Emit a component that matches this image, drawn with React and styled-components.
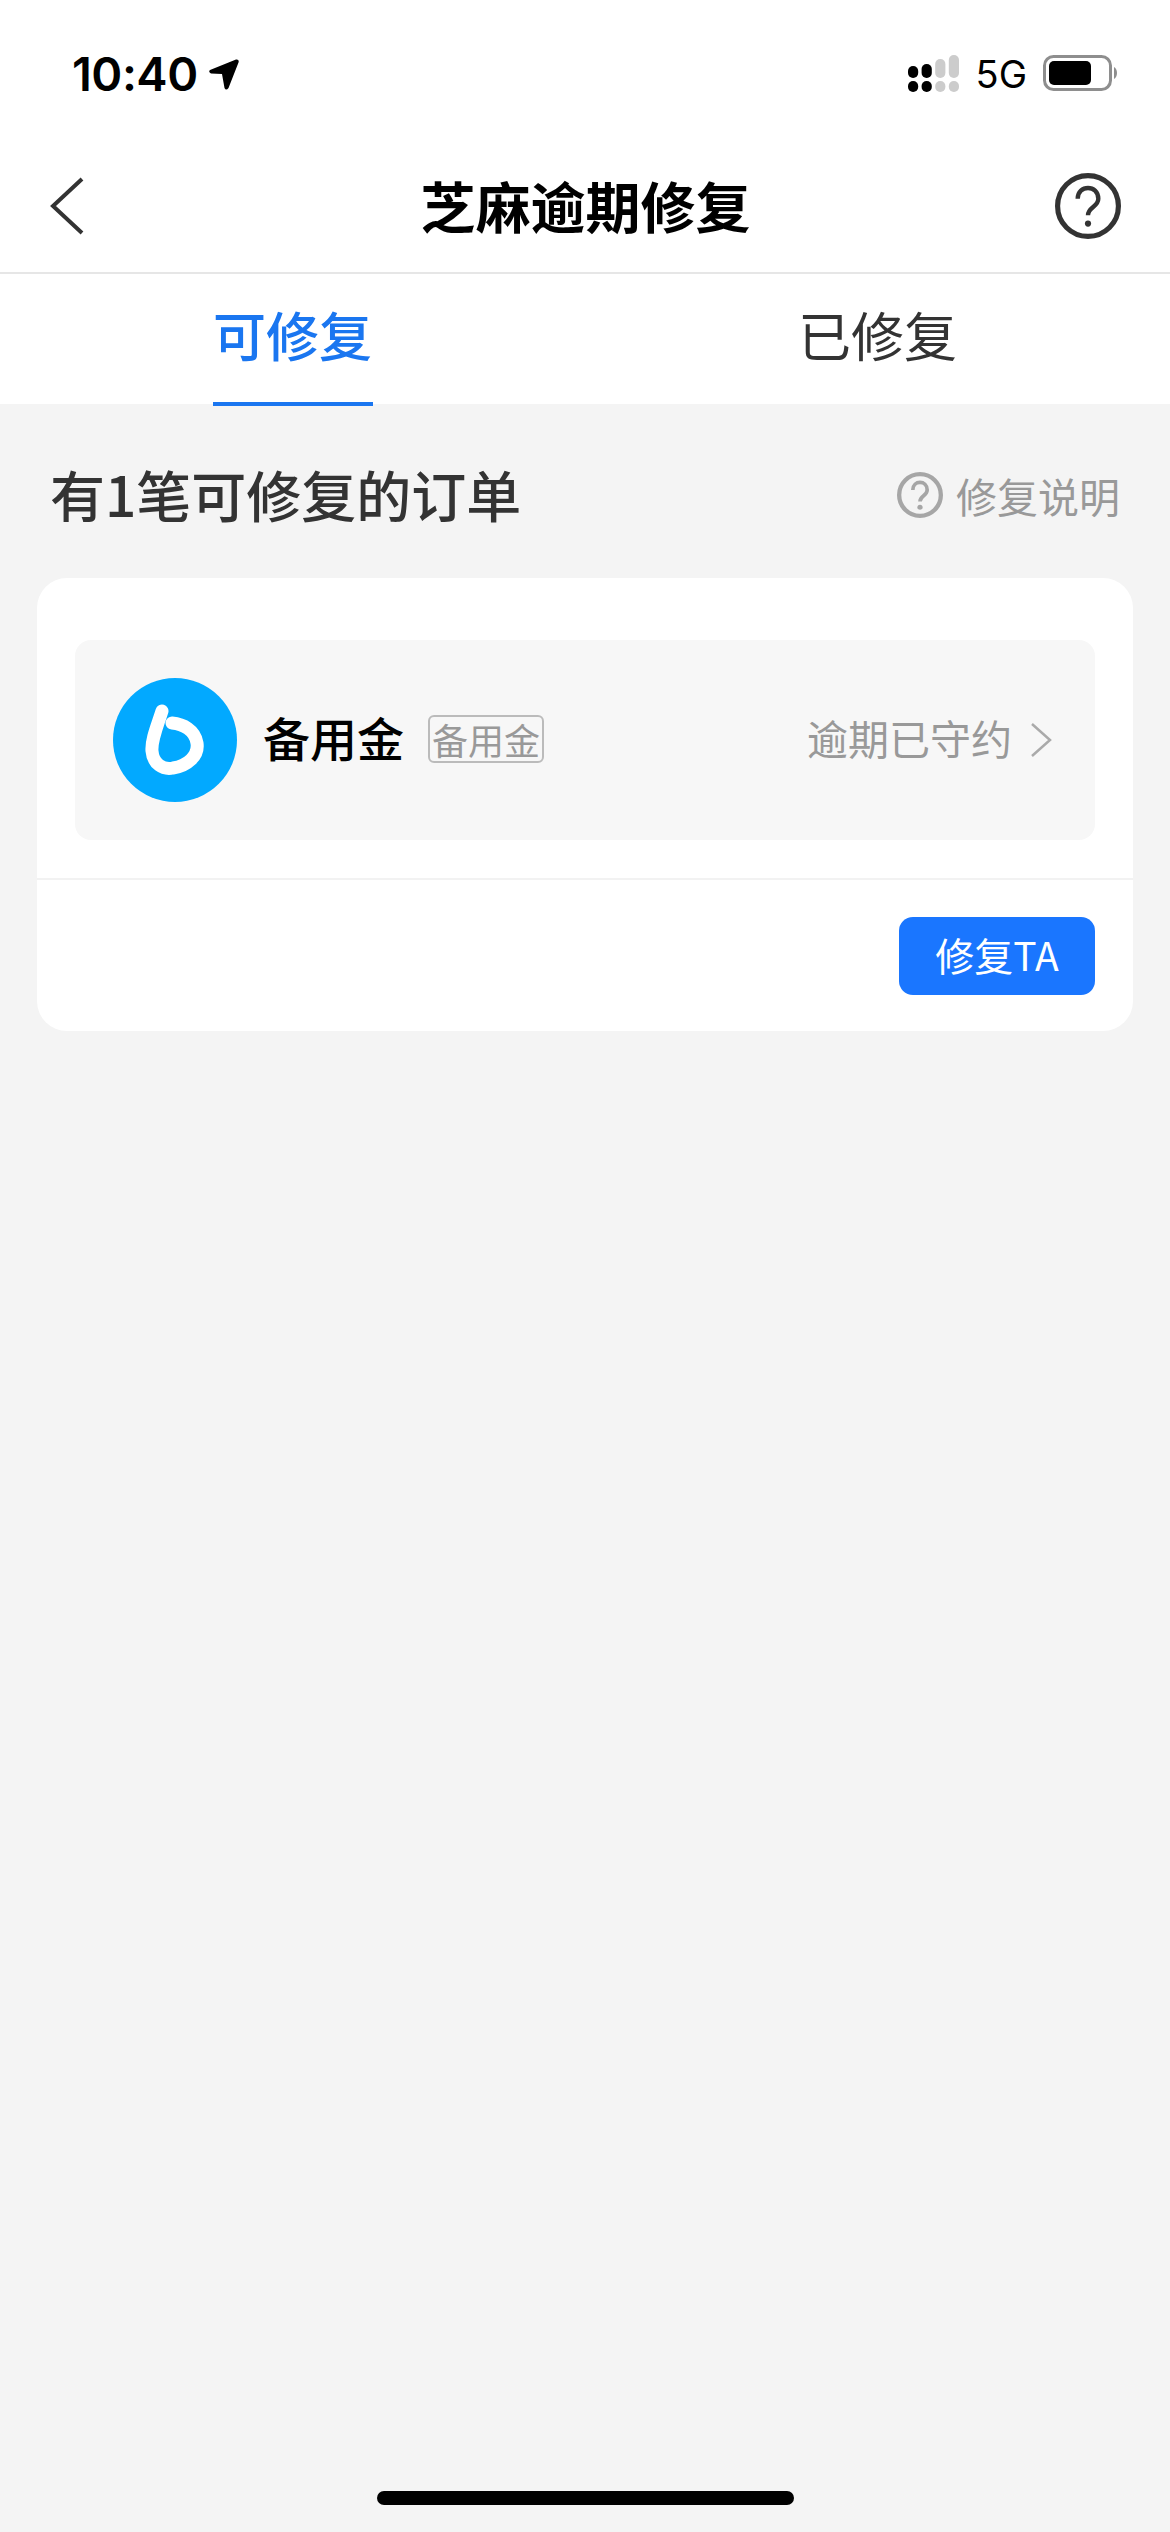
import React from 'react';
import styled, { createGlobalStyle } from 'styled-components';

const Global = createGlobalStyle`
  html, body { margin: 0; padding: 0; background: #f4f4f4; }
  * { box-sizing: border-box; }
  body { font-family: "Inter", "Noto Sans CJK SC", sans-serif; }
`;
const cjk = `"Noto Sans CJK SC", "Inter", sans-serif`;

const Page = styled.div`
  position: relative; width: 1170px; height: 2532px; display: flex; flex-direction: column; background: #f4f4f4;
`;
const Header = styled.header`background: #fff;`;
const StatusBar = styled.div`
  height: 135px; padding: 0 52px 0 72px; display: flex; justify-content: space-between; align-items: flex-start;
`;
const TimeGroup = styled.div`
  display: flex; align-items: center; gap: 11px; height: 48px; margin-top: 50px;
`;
const Time = styled.span`
  font: 600 47px/48px "Inter", sans-serif; color: #000; letter-spacing: -0.5px;
`;
const StatusRight = styled.div`
  display: flex; align-items: center; height: 40px; margin-top: 54px;
`;
const NetLabel = styled.span`
  font: 400 38px/40px "Inter", sans-serif; color: #000; margin: 0 16px 0 17px;
`;
const Nav = styled.nav`
  height: 139px; padding: 0 49px 0 50px; display: grid; grid-template-columns: 1fr auto 1fr; align-items: center;
  border-bottom: 2px solid #e6e6e6;
`;
const NavSide = styled.div`
  display: flex; padding-top: 5px; justify-content: ${p => (p.$end ? 'flex-end' : 'flex-start')}; align-items: center;
`;
const NavTitle = styled.h1`
  margin: 0; font: 600 55px/72px ${cjk}; color: #000;
`;
const Tabs = styled.div`display: grid; grid-template-columns: 1fr 1fr; height: 130px;`;
const Tab = styled.div`display: flex; justify-content: center;`;
const TabLabel = styled.div`
  height: 132px; width: 160px; text-align: center; padding-top: 22px;
  font: ${p => (p.$active ? 500 : 400)} 53px/76px ${cjk};
  color: ${p => (p.$active ? '#1a76f0' : '#333')};
  border-bottom: 4px solid ${p => (p.$active ? '#1a76f0' : 'transparent')};
  white-space: nowrap;
`;
const Body = styled.main`flex: 1; padding: 0 37px;`;
const Section = styled.div`
  height: 174px; padding: 6px 13px 0; display: flex; justify-content: space-between; align-items: center;
`;
const SectionTitle = styled.h2`
  margin: -2px 0 0; font: 500 55px/70px ${cjk}; color: #333;
`;
const Help = styled.div`display: flex; align-items: center; gap: 13px; margin-top: 2px;`;
const HelpText = styled.span`font: 400 41px/56px ${cjk}; color: #999;`;
const Card = styled.section`
  background: #fff; border-radius: 30px; height: 453px; display: flex; flex-direction: column;
`;
const CardTop = styled.div`
  height: 302px; padding: 62px 38px 0; border-bottom: 2px solid #f2f2f2;
`;
const Row = styled.div`
  height: 200px; background: #f7f7f7; border-radius: 16px; padding: 0 43px 0 38px;
  display: flex; align-items: center;
`;
const Name = styled.span`
  font: 500 47px/60px ${cjk}; color: #000; margin: 0 24px 0 26px; position: relative; top: -3px;
`;
const Badge = styled.span`
  width: 116px; height: 48px; border: 2px solid #bbb; border-radius: 6px; position: relative; top: -1px;
  display: flex; align-items: center; justify-content: center;
  font: 400 36px/44px ${cjk}; color: #999;
`;
const Status = styled.span`
  margin-left: auto; font: 400 41px/56px ${cjk}; color: #999; margin-right: 18px; position: relative; top: -3px;
`;
const CardFoot = styled.div`
  flex: 1; padding: 37px 38px 0; display: flex; justify-content: flex-end; align-items: flex-start;
`;
const Btn = styled.button`
  width: 196px; height: 78px; border: 0; border-radius: 14px; background: #1a76ff; color: #fff; padding: 0 0 4px;
  font: 400 39px/74px ${cjk};
`;
const HomeBar = styled.div`
  position: absolute; left: 377px; top: 2491px; width: 417px; height: 14px; border-radius: 7px; background: #000;
`;

const Signal = () => (
  <svg width="51" height="38" viewBox="0 0 51 38">
    {[0, 13.6, 27.2, 40.8].map((x, i) => (
      <g key={i} fill={i < 2 ? '#000' : '#ccc'}>
        <rect x={x} y={26} width={10.2} height={11} rx={5} />
        <rect x={x} y={[11, 9, 4, 0][i]} width={10.2} height={[12, 14, 19, 23][i]} rx={5} />
      </g>
    ))}
  </svg>
);
const Battery = () => (
  <svg width="75" height="38" viewBox="0 0 75 38">
    <rect x="1.5" y="1.5" width="66" height="33" rx="9" fill="none" stroke="#8e8e8e" strokeWidth="3" />
    <rect x="6" y="6" width="42" height="24" rx="5" fill="#000" />
    <path d="M71 12 C75 14 75 22 71 24 Z" fill="#8e8e8e" />
  </svg>
);
const Arrow = () => (
  <svg width="30" height="31" viewBox="0 0 30 31">
    <path d="M1 11 L27 0.5 Q30.5 0 29.5 3.5 L19.5 29 Q17 32 15.5 29 L13 15 L2 14.5 Q-1 13 1 11 Z" fill="#000" />
  </svg>
);
const Back = () => (
  <svg width="36" height="58" viewBox="0 0 36 58">
    <path d="M32 2 L3 29 L32 56" fill="none" stroke="#333" strokeWidth="4" />
  </svg>
);
const Question = ({ size, color, stroke }) => (
  <svg width={size} height={size} viewBox="0 0 64 64">
    <circle cx="32" cy="32" r={32 - stroke / 2} fill="none" stroke={color} strokeWidth={stroke} />
    <path d="M22 25 C22 11 42 11 42 25 C42 33 32 33 32 41" fill="none" stroke={color} strokeWidth={stroke * 0.85} />
    <circle cx="32" cy="49" r={stroke * 0.6} fill={color} />
  </svg>
);
const Logo = () => (
  <svg width="124" height="124" viewBox="0 0 124 124">
    <circle cx="62" cy="62" r="62" fill="#02a9ff" />
    <path d="M49 33 C45 46 38 62 39 73 C40 86 50 92 60 90 C74 88 86 78 84 65 C82 52 70 46 59 45" fill="none" stroke="#fff" strokeWidth="13" strokeLinecap="round" />
  </svg>
);
const Chevron = () => (
  <svg width="22" height="34" viewBox="0 0 22 34">
    <path d="M2 1 L20 17 L2 33" fill="none" stroke="#aaa" strokeWidth="2.5" />
  </svg>
);

export default function App() {
  return (
    <Page>
      <Global />
      <Header>
        <StatusBar>
          <TimeGroup><Time>10:40</Time><Arrow /></TimeGroup>
          <StatusRight><Signal /><NetLabel>5G</NetLabel><Battery /></StatusRight>
        </StatusBar>
        <Nav>
          <NavSide><Back /></NavSide>
          <NavTitle>芝麻逾期修复</NavTitle>
          <NavSide $end><Question size={66} color="#333" stroke={5} /></NavSide>
        </Nav>
        <Tabs>
          <Tab><TabLabel $active>可修复</TabLabel></Tab>
          <Tab><TabLabel>已修复</TabLabel></Tab>
        </Tabs>
      </Header>
      <Body>
        <Section>
          <SectionTitle>有1笔可修复的订单</SectionTitle>
          <Help><Question size={46} color="#a6a6a6" stroke={6} /><HelpText>修复说明</HelpText></Help>
        </Section>
        <Card>
          <CardTop>
            <Row>
              <Logo />
              <Name>备用金</Name>
              <Badge>备用金</Badge>
              <Status>逾期已守约</Status>
              <Chevron />
            </Row>
          </CardTop>
          <CardFoot><Btn>修复TA</Btn></CardFoot>
        </Card>
      </Body>
      <HomeBar />
    </Page>
  );
}
